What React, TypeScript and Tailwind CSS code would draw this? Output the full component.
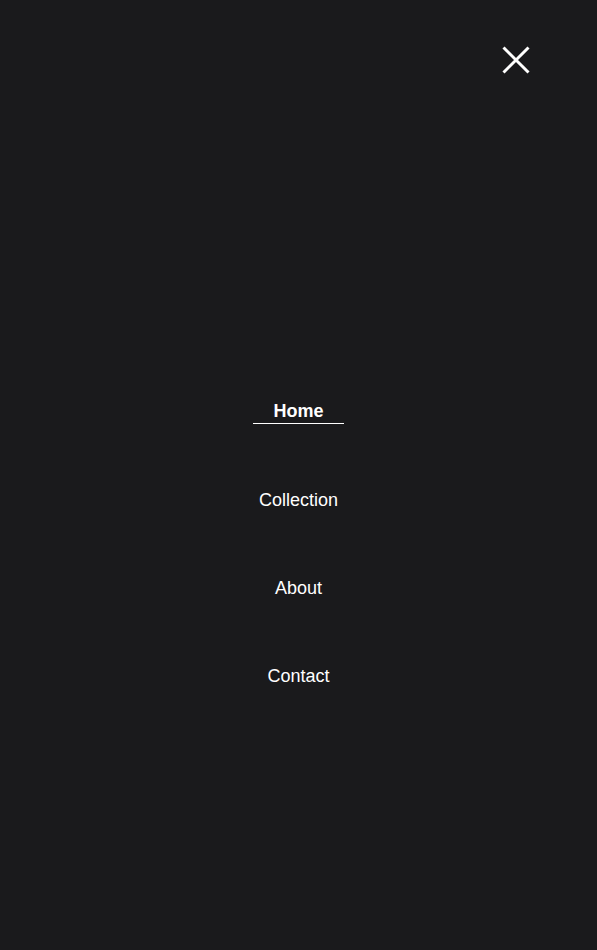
import { useState } from "react";

const LINKS = ["Home", "Collection", "About", "Contact"];

export default function App() {
  const [active, setActive] = useState("Home");
  return (
    <div className="min-h-[950px] w-full bg-[#1a1a1c] font-['Liberation_Sans',Arial,sans-serif] text-white">
      {/* ---------- cabecera ---------- */}
      <div className="flex justify-end pt-[46px] pr-[67px]">
        <button aria-label="Close menu" className="bg-transparent border-none p-0 cursor-pointer text-white">
          <svg width="28" height="28" viewBox="0 0 28 28" fill="none">
            <path d="M1.5 1.5l25 25M1.5 26.5l25-25" stroke="currentColor" strokeWidth="3"/>
          </svg>
        </button>
      </div>

      {/* ---------- menú ---------- */}
      <nav className="mt-[325px]">
        <ul className="flex flex-col items-center gap-[63px] m-0 p-0 list-none">
          {LINKS.map(l => {
            const on = active === l;
            return (
              <li key={l}>
                <a
                  href="#"
                  onClick={e => { e.preventDefault(); setActive(l); }}
                  className={`block px-5 text-[18px] leading-6 ${on ? "font-bold border-b border-white" : "font-normal pt-px"}`}
                >
                  {l}
                </a>
              </li>
            );
          })}
        </ul>
      </nav>
    </div>
  );
}
